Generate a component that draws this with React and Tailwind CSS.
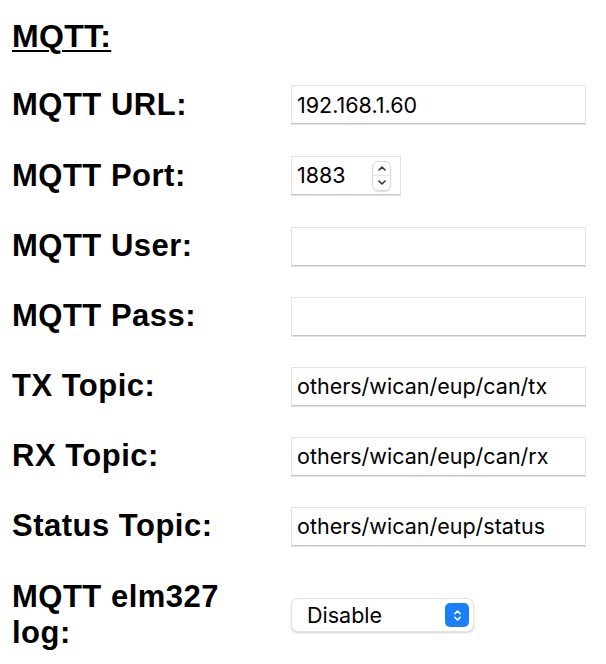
import React from "react";

const labelCls =
  "w-[279px] shrink-0 pr-[14px] font-['Liberation_Sans',Arial,sans-serif] font-bold text-[31px] tracking-[0.5px] leading-[36px] text-black";
const inputCls =
  "h-[39px] bg-white border border-[#e4e4e4] border-b-[#c6c6c6] shadow-[0_1px_0_#e2e2e2] px-[5px] font-['Inter',sans-serif] text-[21.5px] text-black outline-none";

function Row({ label, children, h = "h-[70px]" }) {
  return (
    <div className={`flex items-center ${h}`}>
      <div className={labelCls}>{label}</div>
      {children}
    </div>
  );
}

function TextInput({ value }) {
  return <input readOnly value={value} className={`${inputCls} w-[295px]`} />;
}

export default function App() {
  return (
    <div className="w-[606px] h-[664px] bg-white pl-3 overflow-hidden">
      <div className="h-[69px] pt-[20px]">
        <h2 className="font-['Liberation_Sans',Arial,sans-serif] font-bold text-[32px] tracking-[0.3px] leading-[32px] underline decoration-2 underline-offset-[3px] text-black">
          MQTT:
        </h2>
      </div>
      <Row label="MQTT URL:" h="h-[71px]">
        <TextInput value="192.168.1.60" />
      </Row>
      <Row label="MQTT Port:" h="h-[71px]">
        <div className={`${inputCls} w-[110px] flex items-center justify-between pr-[9px]`}>
          <span>1883</span>
          <div className="w-[19px] h-[30px] rounded-[6px] border border-[#d8d8d8] shadow-[0_1px_1px_rgba(0,0,0,0.12)] flex flex-col items-center justify-center">
            <div className="w-full flex-1 flex items-center justify-center border-b border-[#e6e6e6]">
              <svg width="10" height="7" viewBox="0 0 10 7" fill="none">
                <path d="M2 5 L5 2 L8 5" stroke="#333" strokeWidth="1.6" strokeLinecap="round" strokeLinejoin="round" />
              </svg>
            </div>
            <div className="w-full flex-1 flex items-center justify-center">
              <svg width="10" height="7" viewBox="0 0 10 7" fill="none">
                <path d="M2 2 L5 5 L8 2" stroke="#333" strokeWidth="1.6" strokeLinecap="round" strokeLinejoin="round" />
              </svg>
            </div>
          </div>
        </div>
      </Row>
      <Row label="MQTT User:">
        <TextInput value="" />
      </Row>
      <Row label="MQTT Pass:">
        <TextInput value="" />
      </Row>
      <Row label="TX Topic:">
        <TextInput value="others/wican/eup/can/tx" />
      </Row>
      <Row label="RX Topic:">
        <TextInput value="others/wican/eup/can/rx" />
      </Row>
      <Row label="Status Topic:">
        <TextInput value="others/wican/eup/status" />
      </Row>
      <Row label="MQTT elm327 log:" h="h-[108px]">
        <div className="w-[183px] h-[34px] rounded-[7px] bg-white border border-[#e2e2e2] shadow-[0_1px_2px_rgba(0,0,0,0.18)] flex items-center justify-between pl-[15px] pr-[4px] font-['Inter',sans-serif] text-[21.5px] text-black">
          <span>Disable</span>
          <div className="w-[24px] h-[24px] rounded-[5px] bg-[#1b7ffb] flex items-center justify-center">
            <svg width="9" height="15" viewBox="0 0 10 16" fill="none">
              <path d="M2 6 L5 3 L8 6" stroke="#fff" strokeWidth="1.8" strokeLinecap="round" strokeLinejoin="round" />
              <path d="M2 10 L5 13 L8 10" stroke="#fff" strokeWidth="1.8" strokeLinecap="round" strokeLinejoin="round" />
            </svg>
          </div>
        </div>
      </Row>
    </div>
  );
}
